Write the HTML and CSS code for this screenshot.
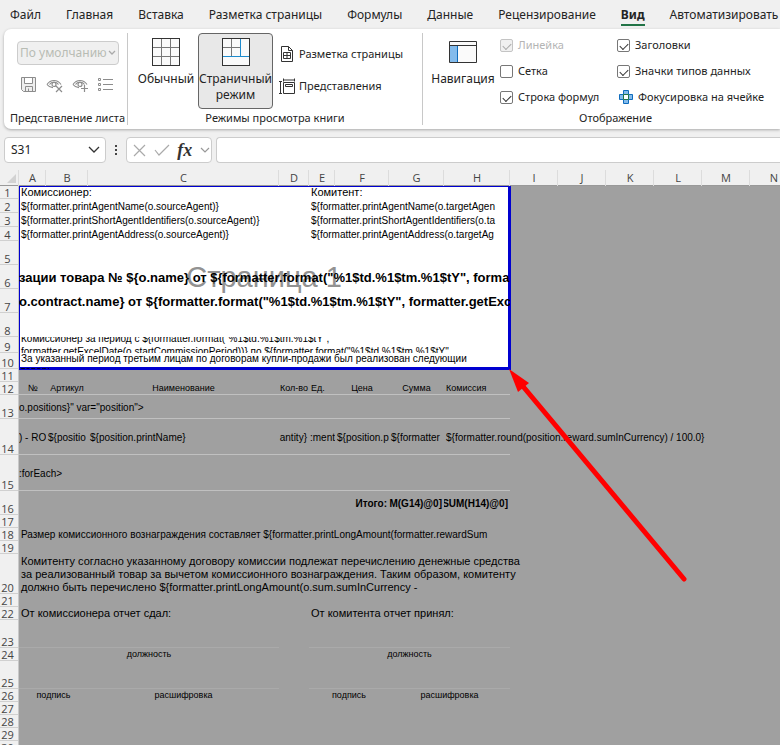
FILE: index.html
```html
<!DOCTYPE html>
<html lang="ru">
<head>
<meta charset="utf-8">
<title>Страничный режим</title>
<link rel="stylesheet" href="styles.css">
</head>
<body>
<nav class="tabs">
  <a href="#">Файл</a><a href="#">Главная</a><a href="#">Вставка</a><a href="#">Разметка страницы</a><a href="#">Формулы</a><a href="#">Данные</a><a href="#">Рецензирование</a><a href="#" class="active">Вид</a><a href="#">Автоматизировать</a>
</nav>

<section class="ribbon">
  <div class="group group-views">
    <div class="group-body">
      <div class="select-wrap">
        <select aria-label="Представление листа" disabled><option>По умолчанию</option></select>
        <svg class="select-arrow" width="8" height="6" viewBox="0 0 8 6"><path d="M1 1l3 3 3-3" fill="none" stroke="#aaa" stroke-width="1.3"/></svg>
      </div>
      <div class="small-icons">
        <button disabled aria-label="Сохранить"><svg width="16" height="16" viewBox="0 0 16 16"><path d="M.5.5h14v14H2.500l-2-2zM3.500.5v6h8v-6M4.500 14.500v-5h7v5M7.500 14.500v-3" fill="#eee" stroke="#8c8c8c"/></svg></button>
        <button disabled aria-label="Выход"><svg width="17" height="16" viewBox="0 0 17 16"><g fill="none" stroke="#8c8c8c" stroke-width="1.200"><path d="M1 7.500c2-3 4.500-4 7-4s5 1 7 4M1 7.500c1.500 2 3.500 3 6 3.200M3.500 7.500c1-1.500 2.500-2.300 4.500-2.300s3.500.8 4.500 2.300"/><circle cx="8" cy="7.500" r="2"/><path d="M10 9l6 6M16 9l-6 6"/></g></svg></button>
        <button disabled aria-label="Создать"><svg width="17" height="16" viewBox="0 0 17 16"><g fill="none" stroke="#8c8c8c" stroke-width="1.200"><path d="M1 7.500c2-3 4.500-4 7-4s5 1 7 4M1 7.500c1.500 2 3.500 3 6 3.200M3.500 7.500c1-1.500 2.500-2.300 4.500-2.300s3.500.8 4.500 2.300"/><circle cx="8" cy="7.500" r="2"/><path d="M12.500 8v7M9 11.500h7"/></g></svg></button>
        <button disabled aria-label="Параметры"><svg width="16" height="16" viewBox="0 0 16 16"><g fill="none" stroke="#8c8c8c" stroke-width="1"><path d="M.5 1.500h2v2h-2zM.5 6.500h2v2h-2zM.5 11.500h2v2h-2z"/><path d="M5 2.500h10M5 7.500h10M5 12.500h10"/></g></svg></button>
      </div>
    </div>
    <div class="group-label">Представление листа</div>
  </div>

  <div class="group group-modes">
    <div class="group-body modes">
      <button class="big"><svg width="28" height="28" viewBox="0 0 28 28"><rect x=".5" y=".5" width="27" height="27" fill="#fafafa"/><path d="M9.500 1v26M18.500 1v26M1 9.500h26M1 18.500h26" stroke="#777"/><rect x=".5" y=".5" width="27" height="27" fill="none" stroke="#333"/></svg><span>Обычный</span></button>
      <button class="big pressed" aria-pressed="true"><svg width="28" height="28" viewBox="0 0 28 28"><rect x=".5" y=".5" width="27" height="27" fill="#fafafa"/><path d="M9.500 1v17M1 9.500h17" stroke="#777"/><rect x=".5" y=".5" width="27" height="27" fill="none" stroke="#333"/><path d="M18.500 1v17M1 18.500h26" stroke="#1e8bcd"/></svg><span>Страничный<br>режим</span></button>
      <div class="stack">
        <button class="row-btn"><svg width="16" height="16" viewBox="0 0 16 16"><g fill="none" stroke="#333"><path d="M2.500.5h7l4 4v11h-11zM9.500.5v4h4"/><path d="M4.500 6.500h7v6h-7zM8 6.500v6M4.500 9.500h7"/></g></svg><span>Разметка страницы</span></button>
        <button class="row-btn"><svg width="16" height="16" viewBox="0 0 16 16"><g fill="none" stroke="#333"><path d="M4.500.5v3M15.500.5v3M4.500 2h11M0 3.500h3M0 15.500h3M1.500 4v11"/><path d="M4.500 4.500h11v11h-11zM6.500 6.500h7v2h-7z"/></g></svg><span>Представления</span></button>
      </div>
    </div>
    <div class="group-label">Режимы просмотра книги</div>
  </div>

  <div class="group group-show">
    <div class="group-body show">
      <button class="big nav"><svg width="28" height="28" viewBox="0 0 28 28"><rect x=".5" y="3.500" width="27" height="21" fill="#fafafa"/><path d="M1 7h8v17H1z" fill="#83bbec"/><path d="M.5 7.500h27M.5 3.500h27v21H.5z" fill="none" stroke="#333"/><path d="M8.500 8v16" stroke="#0f6cbd"/></svg><span>Навигация</span></button>
      <div class="checks">
        <label class="off"><input type="checkbox" checked disabled>Линейка</label>
        <label><input type="checkbox">Сетка</label>
        <label><input type="checkbox" checked>Строка формул</label>
      </div>
      <div class="checks">
        <label><input type="checkbox" checked>Заголовки</label>
        <label><input type="checkbox" checked>Значки типов данных</label>
        <button class="focus"><svg width="14" height="14" viewBox="0 0 14 14"><path d="M4.500.5h5v4h4v5h-4v4h-5v-4h-4v-5h4z" fill="#83bbec" stroke="#0f6cbd"/><path d="M4.500 4.500h5v5h-5z" fill="#fff" stroke="#217346"/></svg><span>Фокусировка на ячейке</span></button>
      </div>
    </div>
    <div class="group-label">Отображение</div>
  </div>
</section>

<div class="formula-bar">
  <div class="box name-box"><input aria-label="Имя" value="S31"><button aria-label="Список имён"><svg width="12" height="8" viewBox="0 0 12 8"><path d="M1 1l5 5 5-5" fill="none" stroke="#333" stroke-width="1.300"/></svg></button></div>
  <span class="dots"><i></i><i></i><i></i></span>
  <div class="box fx-box">
    <button aria-label="Отмена"><svg width="13" height="13" viewBox="0 0 13 13"><path d="M1 1l11 11M12 1L1 12" stroke="#aaa" stroke-width="1.200"/></svg></button>
    <button aria-label="Ввод"><svg width="16" height="12" viewBox="0 0 16 12"><path d="M1 6l4 5L15 1" fill="none" stroke="#aaa" stroke-width="1.200"/></svg></button>
    <button class="fx">fx</button>
    <button aria-label="Ещё"><svg width="10" height="7" viewBox="0 0 10 7"><path d="M1 1l4 4 4-4" fill="none" stroke="#999" stroke-width="1.200"/></svg></button>
  </div>
  <input class="box formula" aria-label="Строка формул">
</div>

<main class="sheet">
  <table>
    <colgroup><col class="w-head"><col class="w-a"><col class="w-b"><col class="w-c"><col class="w-d"><col class="w-e"><col class="w-f"><col class="w-g"><col class="w-h"><col class="w-i"><col class="w-i"><col class="w-i"><col class="w-i"><col class="w-i"><col class="w-i"></colgroup>
    <thead><tr><th class="corner"><svg width="9" height="9" viewBox="0 0 9 9"><path d="M9 0v9H0z" fill="#d2d2d2"/></svg></th><th>A</th><th>B</th><th>C</th><th>D</th><th>E</th><th>F</th><th>G</th><th>H</th><th>I</th><th>J</th><th>K</th><th>L</th><th>M</th><th>N</th></tr></thead>
    <tbody class="page">
      <tr class="r13 prose"><th>1</th><td colspan="4"><div>Комиссионер:</div></td><td colspan="4"><div>Комитент:</div></td></tr>
      <tr class="r14"><th>2</th><td colspan="4"><div>${formatter.printAgentName(o.sourceAgent)}</div></td><td colspan="4"><div>${formatter.printAgentName(o.targetAgen</div></td></tr>
      <tr class="r14"><th>3</th><td colspan="4"><div>${formatter.printShortAgentIdentifiers(o.sourceAgent)}</div></td><td colspan="4"><div>${formatter.printShortAgentIdentifiers(o.ta</div></td></tr>
      <tr class="r14"><th>4</th><td colspan="4"><div>${formatter.printAgentAddress(o.sourceAgent)}</div></td><td colspan="4"><div>${formatter.printAgentAddress(o.targetAg</div></td></tr>
      <tr class="r24"><th>5</th><td colspan="8"></td></tr>
      <tr class="r24 title"><th>6</th><td colspan="8"><div>зации товара № ${o.name} от ${formatter.format("%1$td.%1$tm.%1$tY", forma</div></td></tr>
      <tr class="r24 title"><th>7</th><td colspan="8"><div>o.contract.name} от ${formatter.format("%1$td.%1$tm.%1$tY", formatter.getExc</div></td></tr>
      <tr class="r24"><th>8</th><td colspan="8"></td></tr>
      <tr class="r16"><th>9</th><td colspan="8"><div>Комиссионер за период с ${formatter.format("%1$td.%1$tm.%1$tY",<br>formatter.getExcelDate(o.startCommissionPeriod))} по ${formatter.format("%1$td.%1$tm.%1$tY"</div></td></tr>
      <tr class="r16 top"><th>10</th><td colspan="8"><div>За указанный период третьим лицам по договорам купли-продажи был реализован следующии<br>товар:</div></td></tr>
    </tbody>
    <tbody>
      <tr class="r13"><th>11</th></tr>
      <tr class="r13 ruled heads"><th>12</th><td><div>№</div></td><td><div>Артикул</div></td><td><div>Наименование</div></td><td><div>Кол-во</div></td><td class="left"><div>Ед.</div></td><td><div>Цена</div></td><td><div>Сумма</div></td><td class="left"><div>Комиссия</div></td></tr>
      <tr class="r24 ruled"><th>13</th><td colspan="8" class="edge"><div>o.positions}" var="position"&gt;</div></td></tr>
      <tr class="r36 ruled"><th>14</th><td class="edge"><div>) - RO</div></td><td><div>${positio</div></td><td><div>${position.printName}</div></td><td class="right"><div>antity}</div></td><td class="right edge"><div>:ment</div></td><td><div>${position.p</div></td><td><div>${formatter</div></td><td class="spill"><div>${formatter.round(position.reward.sumInCurrency) / 100.0}</div></td></tr>
      <tr class="r36 ruled"><th>15</th><td colspan="8" class="edge"><div>:forEach&gt;</div></td></tr>
      <tr class="r24 total"><th>16</th><td colspan="6" class="right"><div>Итого:</div></td><td class="right"><div>M(G14)@0]</div></td><td class="right"><div>SUM(H14)@0]</div></td></tr>
      <tr class="r13"><th>17</th></tr>
      <tr class="r13"><th>18</th><td colspan="8"><div>Размер комиссионного вознаграждения составляет ${formatter.printLongAmount(formatter.rewardSum</div></td></tr>
      <tr class="r13"><th>19</th></tr>
      <tr class="r40 prose"><th>20</th><td colspan="8" class="spill"><div>Комитенту согласно указанному договору комиссии подлежат перечислению денежные средства<br>за реализованный товар за вычетом комиссионного вознаграждения. Таким образом, комитенту<br>должно быть перечислено ${formatter.printLongAmount(o.sum.sumInCurrency -</div></td></tr>
      <tr class="r13"><th>21</th></tr>
      <tr class="r13 prose"><th>22</th><td colspan="4"><div>От комиссионера отчет сдал:</div></td><td colspan="4"><div>От комитента отчет принял:</div></td></tr>
      <tr class="r28 signs"><th>23</th><td colspan="3"></td><td class="gap"></td><td colspan="4"></td></tr>
      <tr class="r13 heads"><th>24</th><td colspan="3"><div>должность</div></td><td></td><td colspan="4"><div>должность</div></td></tr>
      <tr class="r28 signs"><th>25</th><td colspan="3"></td><td class="gap"></td><td colspan="4"></td></tr>
      <tr class="r13 heads"><th>26</th><td colspan="2"><div>подпись</div></td><td><div>расшифровка</div></td><td></td><td colspan="2"><div>подпись</div></td><td colspan="2"><div>расшифровка</div></td></tr>
      <tr class="r13"><th>27</th></tr>
      <tr class="r13"><th>28</th></tr>
      <tr class="r13"><th>29</th></tr>
      <tr class="r13"><th>30</th></tr>
    </tbody>
  </table>
  <div class="page-frame"><span>Страница 1</span></div>
  <svg class="arrow" width="180" height="216" viewBox="0 0 180 216"><path d="M12 15L175 210" stroke="#f00" stroke-width="5" stroke-linecap="round"/><path d="M0 0l20 14-11 9z" fill="#f00"/></svg>
</main>
</body>
</html>
```
FILE: styles.css
```css
* { box-sizing: border-box; }

body {
  margin: 0;
  height: 100vh;
  overflow: hidden;
  display: flex;
  flex-direction: column;
  background: #f0f0f0;
  color: #242424;
  font: 12px/16px "Noto Sans", sans-serif;
}

button, input, select { font: inherit; color: inherit; }
button { border: 0; background: none; padding: 0; }
svg { display: block; flex: none; }

/* Tabs */
.tabs { display: flex; gap: 25px; padding: 6px 0 3px 10px; height: 29px; flex: none; }
.tabs a { color: inherit; text-decoration: none; white-space: nowrap; line-height: 18px; }
.tabs .active { font-weight: 700; border-bottom: 2px solid #217346; }

/* Ribbon */
.ribbon {
  flex: none;
  display: flex;
  height: 100px;
  margin-left: 4px;
  padding: 4px 0;
  background: #fff;
  border-radius: 7px 0 0 7px;
  box-shadow: 0 1px 3px rgba(0, 0, 0, .3);
  font-size: 11px;
}
.group { display: flex; flex-direction: column; border-right: 1px solid #c8c8c8; }
.group-body { flex: 1; }
.group-label { text-align: center; line-height: 14px; white-space: nowrap; }
.group-views { width: 124px; padding-left: 4px; }
.group-modes { width: 295px; }
.group-show { flex: 1; border: 0; }
.group-show .group-label { padding-left: 28px; }

.select-wrap { position: relative; margin: 8px 8px 0 9px; }
select {
  display: block;
  appearance: none;
  width: 100%;
  height: 24px;
  padding: 0 2px;
  border: 1px solid #ccc;
  border-radius: 4px;
  background: #f0f0f0;
  font-size: 12px;
}
select:disabled { color: #b8bcb4; opacity: 1; }
.select-arrow { position: absolute; right: 3px; top: 9px; }
.small-icons { display: flex; gap: 9px; padding: 12px 0 0 13px; }

.modes { display: flex; padding-left: 6px; }
.big {
  display: flex;
  flex-direction: column;
  align-items: center;
  gap: 5px;
  width: 64px;
  height: 76px;
  padding-top: 4px;
  border: 1px solid transparent;
  border-radius: 4px;
  font-size: 12px;
  white-space: nowrap;
}
.big.pressed { width: 75px; background: #e8e8e8; border-color: #666; }
.stack { display: flex; flex-direction: column; gap: 16px; padding: 13px 0 0 6px; }
.row-btn { display: flex; gap: 4px; align-items: center; white-space: nowrap; }

.show { display: flex; padding-left: 8px; }
.checks { display: flex; flex-direction: column; gap: 10px; padding: 4px 0 0 5px; width: 117px; }
.checks label { display: flex; align-items: center; gap: 5px; height: 16px; white-space: nowrap; }
.checks .off { color: #b4b4b4; }
.checks input {
  appearance: none;
  flex: none;
  width: 13px;
  height: 13px;
  margin: 0;
  border: 1px solid #777;
  border-radius: 2px;
  background: #fff;
  display: grid;
  place-items: center;
}
.checks input:checked::after {
  content: "";
  width: 7px;
  height: 4px;
  border: solid #333;
  border-width: 0 0 1px 1px;
  transform: rotate(-45deg);
}
.checks input:disabled { border-color: #c4c4c4; background: #f0f0f0; }
.checks input:disabled::after { border-color: #aaa; }
.focus { display: flex; gap: 5px; align-items: center; height: 16px; padding-left: 2px; white-space: nowrap; }

/* Formula bar */
.formula-bar { flex: none; display: flex; align-items: center; height: 26px; margin: 8px 0 0 4px; }
.box { height: 26px; border: 1px solid #ccc; border-radius: 4px; background: #fff; }
.name-box { display: flex; align-items: center; width: 102px; padding: 0 5px; }
.name-box input { flex: 1; min-width: 0; border: 0; padding: 0 1px; }
.dots { display: grid; gap: 2px; width: 20px; justify-content: center; }
.dots i { width: 2px; height: 2px; background: #444; }
.fx-box { display: flex; align-items: center; justify-content: space-between; width: 86px; padding: 0 1px 0 6px; }
.fx { font: italic 700 18px/20px "Liberation Serif", serif; color: #333; }
.formula { flex: 1; min-width: 0; margin-left: 4px; border-radius: 4px 0 0 4px; border-right: 0; }

/* Worksheet */
.sheet { position: relative; flex: 1; min-height: 0; margin-top: 7px; overflow: hidden; background: #a0a0a0; }
table { width: 798px; table-layout: fixed; border-collapse: collapse; font: 10px/13px "Liberation Sans", sans-serif; color: #000; }
.w-head { width: 19px; }
.w-a { width: 27px; }
.w-b { width: 42px; }
.w-c { width: 191px; }
.w-d { width: 30px; }
.w-e { width: 26px; }
.w-f { width: 54px; }
.w-g { width: 55px; }
.w-h { width: 66px; }
.w-i { width: 48px; }
th, td { padding: 0; }
th { font: 11px/14px "Open Sans", sans-serif; color: #444; background: #f0f0f0; }
thead th { height: 16px; box-shadow: inset -1px 0 #dcdcdc, inset 0 -1px #999; }
.corner svg { margin: 1px 0 0 7px; }
tbody th {
  vertical-align: bottom;
  text-align: center;
  padding-right: 4px;
  line-height: 13px;
  box-shadow: inset -1px 0 #c8c8c8, inset 0 -1px #d0d0d0;
}
td { vertical-align: middle; }
td div {
  display: flex;
  flex-direction: column;
  justify-content: center;
  height: var(--h);
  padding: 0 2px;
  overflow: hidden;
  white-space: nowrap;
}
tr { height: var(--h); }
.r13 { --h: 13px; }
.r14 { --h: 14px; }
.r16 { --h: 16px; }
.r24 { --h: 24px; }
.r28 { --h: 28px; }
.r36 { --h: 36px; }
.r40 { --h: 40px; }
.page td { background: #fff; }
.page div { position: relative; z-index: 2; }
.page .top div { display: block; line-height: 12px; }
.title { font-size: 13px; font-weight: 700; }
.prose { font-size: 11px; }
.title div, .edge div { padding: 0; }
.ruled td { box-shadow: inset 0 -1px #c0c0c0; }
.signs td { box-shadow: inset 0 -1px #aaa; }
.signs .gap { box-shadow: none; }
.heads { font-size: 9px; }
.heads div { align-items: center; }
.heads .left div { align-items: flex-start; }
.right div { align-items: flex-end; }
.total { font-weight: 700; }
.spill div { overflow: visible; }

/* Print area outline and callout lie over the cells */
.page-frame {
  position: absolute;
  left: 19px;
  top: 16px;
  width: 492px;
  height: 184px;
  border: solid #0000d0;
  border-width: 1px 3px 3px 1px;
  display: grid;
  place-items: center;
  font: 29px/32px "Liberation Sans", sans-serif;
  color: #929292;
}
.arrow { position: absolute; left: 509px; top: 199px; z-index: 3; }
```
